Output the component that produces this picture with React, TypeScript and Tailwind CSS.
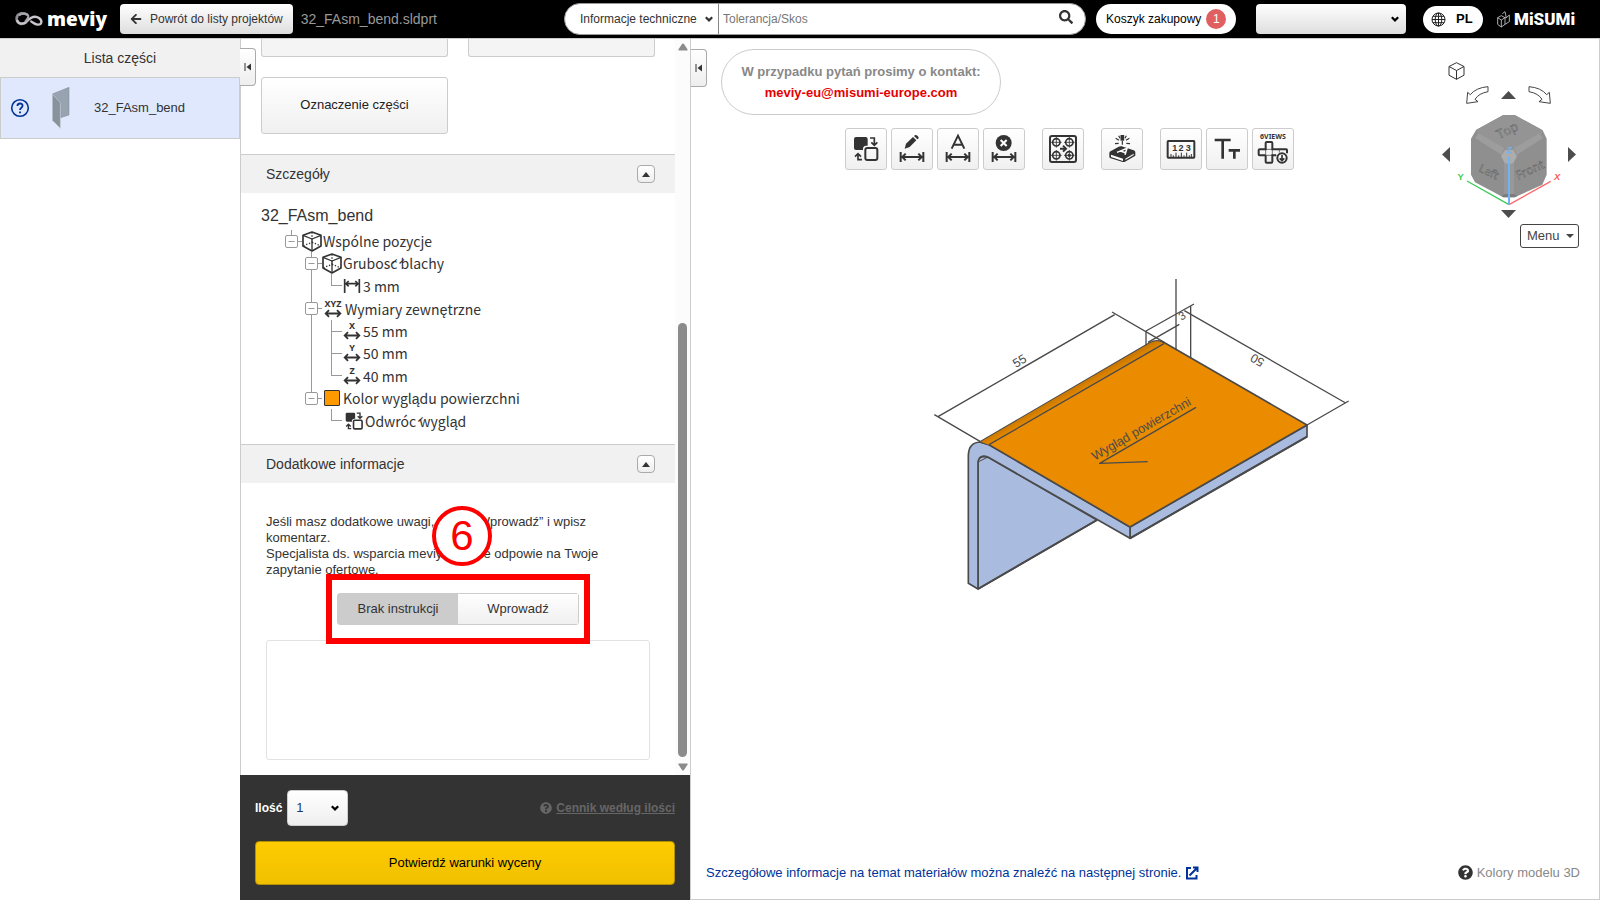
import React, { useState } from 'react';
import { FaArrowLeft, FaQuestionCircle, FaSearch } from 'react-icons/fa';

const Chevron: React.FC<{ className: string }> = ({ className }) => (
    <svg className={className} width="10" height="10" viewBox="0 0 10 10" fill="none" stroke="currentColor" strokeWidth={2.2}>
        <path d="M1.8 3.2L5 6.4L8.2 3.2" />
    </svg>
);

const Header: React.FC = () => (
    <header className="flex h-[38px] shrink-0 items-center bg-black pl-[15px] pr-7 text-xs">
        <a href="#" aria-label="meviy" className="flex h-full w-[105px] items-center gap-[3px] text-white">
            <svg width="29" height="15" viewBox="0 0 87 45" fill="none" className="shrink-0">
                <path d="M38 9C22-2 4 5 5 21C6 36 22 40 34 30" stroke="#8e8b92" strokeWidth="8" />
                <path d="M6 24C10 38 26 38 36 28C46 17 60 10 72 18C84 27 80 39 68 38C58 37 54 31 46 27" stroke="#c9c6cd" strokeWidth="7" />
                <path d="M12 10C24 2 38 5 40 12C40 18 36 24 30 29" stroke="#aaa6ae" strokeWidth="6" />
            </svg>
            <span className="mb-px font-['Open_Sans',sans-serif] text-[19px] leading-5 font-extrabold">meviy</span>
        </a>
        <button type="button" className="flex h-[30px] items-center gap-2 rounded-sm bg-gradient-to-b from-white to-[#dedede] px-[10px] whitespace-nowrap text-[#333]">
            <FaArrowLeft className="size-3" />
            <span>Powrót do listy projektów</span>
        </button>
        <span className="ml-2 text-sm text-[#999]">32_FAsm_bend.sldprt</span>

        <form className="ml-auto flex h-8 w-[522px] items-center overflow-hidden rounded-full border border-[#999] bg-white">
            <div className="relative h-full w-[154px] border-r border-[#888]">
                <select aria-label="Kategoria" className="h-full w-full appearance-none pl-[15px] text-[#333]">
                    <option>Informacje techniczne</option>
                </select>
                <Chevron className="pointer-events-none absolute top-[10px] right-1 text-[#333]" />
            </div>
            <input type="text" aria-label="Szukaj" placeholder="Tolerancja/Skos" className="h-full min-w-0 flex-1 pl-1 placeholder:text-[#777]" />
            <button type="button" aria-label="Szukaj" className="mr-3 mb-1 text-[#333]">
                <FaSearch className="size-[14px]" />
            </button>
        </form>
        <button type="button" className="ml-[10px] flex h-[30px] w-[140px] items-center gap-[5px] rounded-full bg-white pl-[10px] whitespace-nowrap text-black">
            <span>Koszyk zakupowy</span>
            <span className="flex size-5 items-center justify-center rounded-full bg-[#e06062] text-white">1</span>
        </button>
        <div className="relative ml-5 h-[30px] w-[150px]">
            <select aria-label="Konto" className="h-full w-full appearance-none rounded-sm bg-gradient-to-b from-white to-[#dedede]">
                <option></option>
            </select>
            <Chevron className="pointer-events-none absolute top-[10px] right-[6px] text-black" />
        </div>
        <button type="button" className="ml-[17px] flex h-[27px] w-[60px] items-center gap-[10px] rounded-full bg-white pl-2 text-[13px] font-bold text-black">
            <svg width="15" height="15" viewBox="0 0 15 15" fill="none" stroke="#222" strokeWidth="1">
                <circle cx="7.5" cy="7.5" r="6.5" />
                <ellipse cx="7.5" cy="7.5" rx="3.3" ry="6.5" />
                <path d="M7.5 1V14M1 7.5H14M2 4.3H13M2 10.7H13" />
            </svg>
            PL
        </button>
        <a href="#" className="ml-[14px] flex w-[75px] items-center gap-1 text-white">
            <svg width="13" height="17" viewBox="0 0 39 51" fill="none" stroke="#ccc" strokeWidth="2.5" className="shrink-0">
                <path d="M2 20L13 14L24 20V40L13 48L2 40ZM2 20L13 27L24 20M13 27V48M16 8L24 2L28 20L37 12V32L24 40M24 20L28 20" />
            </svg>
            <span className="font-['Roboto',sans-serif] text-[17px] leading-5 font-black">MiSUMi</span>
        </a>
    </header>
);

const CollapseTab: React.FC = () => (
    <button type="button" aria-label="Zwiń panel" className="flex h-[38px] w-4 items-center justify-center rounded-r border border-l-0 border-[#aaa] bg-gradient-to-b from-white to-[#eee]">
        <svg width="8" height="8" viewBox="0 0 8 8">
            <path d="M1 0V8" stroke="#333" />
            <path d="M7 0.5V7.5L2.5 4Z" fill="#333" />
        </svg>
    </button>
);

const PartsList: React.FC = () => (
    <aside className="w-60 shrink-0">
        <h2 className="flex h-[38px] items-center justify-center bg-[#f1f1f1] text-sm text-[#333]">Lista części</h2>
        <button type="button" className="flex h-[62px] w-full items-center border border-[#ccc] bg-[#dfe8fd] pl-[9px] text-[13px] text-[#333]">
            <svg width="20" height="20" viewBox="0 0 20 20" fill="none" stroke="#003399" strokeWidth="1.6">
                <circle cx="10" cy="10" r="8.3" />
                <path d="M7.4 8C7.4 4.7 12.6 4.7 12.6 7.8C12.6 9.7 10 9.7 10 11.9" strokeWidth="1.8" />
                <path d="M10 13.4V15.3" strokeWidth="1.9" />
            </svg>
            <svg width="18" height="42" viewBox="0 0 54 126" className="ml-[22px]">
                <path d="M1 21L51 1V84L26 92V58Z" fill="#98a3b1" stroke="#7f8994" strokeWidth="1.5" />
                <path d="M1 21L25 47V124L1 100Z" fill="#87929d" stroke="#c3cad1" strokeWidth="2" />
            </svg>
            <span className="ml-6">32_FAsm_bend</span>
        </button>
    </aside>
);

const SectionHeader: React.FC<{ title: string }> = ({ title }) => (
    <div className="flex h-[39px] items-center justify-between border-t border-[#ccc] bg-[#f1f1f1] pr-5 pl-[25px]">
        <h3 className="text-sm text-[#333]">{title}</h3>
        <button type="button" aria-label={title} className="flex size-[18px] items-center justify-center rounded-sm border border-[#aaa] bg-gradient-to-b from-white to-[#eee]">
            <svg width="8" height="5" viewBox="0 0 8 5">
                <path d="M0 5L4 0L8 5Z" fill="#333" />
            </svg>
        </button>
    </div>
);

type Guide = 'root' | 'toggle' | 'toggleEnd' | 'line' | 'elbow' | 'elbowEnd' | 'blank';

const guidePaths: Record<Guide, string> = {
    root: 'M9.5 0V5M15 11.5H20',
    toggle: 'M9.5 0V5M9.5 17V23M15 11.5H20',
    toggleEnd: 'M9.5 0V5M15 11.5H20',
    line: 'M9.5 0V23',
    elbow: 'M9.5 0V23M9 11.5H20',
    elbowEnd: 'M9.5 0V12M9 11.5H20',
    blank: '',
};

const TreeGuide: React.FC<{ kind: Guide }> = ({ kind }) => (
    <svg className="h-full w-5 shrink-0" viewBox="0 0 20 23" preserveAspectRatio="xMidYMin slice" fill="none" stroke="#999">
        <path d={guidePaths[kind]} />
        {(kind === 'root' || kind.startsWith('toggle')) && (
            <>
                <rect x="3.5" y="5.5" width="12" height="12" rx="1.5" fill="#fff" />
                <path d="M6.5 11.5H12.5" />
            </>
        )}
    </svg>
);

const CubeIcon: React.FC = () => (
    <svg width="20" height="21" viewBox="0 0 60 63" fill="none" stroke="#333" strokeWidth="5" strokeLinejoin="round">
        <path d="M30 3L57 13V45L30 60L3 45V13Z" />
        <path d="M3 13L30 24L57 13M30 24V60" strokeWidth="4" />
        <path d="M30 4V34L5 44M30 34L55 44" strokeWidth="4" strokeDasharray="4 5" />
    </svg>
);

const WidthIcon: React.FC = () => (
    <svg width="18" height="16" viewBox="0 0 54 48" fill="none" stroke="#333" strokeWidth="5">
        <path d="M5 3V45M49 3V45M8 17H46M17 9L9 17L17 25M37 9L45 17L37 25" />
    </svg>
);

const AxisIcon: React.FC<{ label: string }> = ({ label }) => {
    const width = label.length > 1 ? 22 : 18;
    return (
        <svg className="overflow-visible" width={width} height="20" viewBox={`${-width / 2} 0 ${width} 20`} fill="none" stroke="#333" strokeWidth="1.8">
            <text x="0" y="8" textAnchor="middle" fontSize="9" fontWeight="700" fill="#333" stroke="none" className="font-['Noto_Sans',sans-serif]">
                {label}
            </text>
            <path d="M-7 14.5H7M-4 11.2L-7.3 14.5L-4 17.8M4 11.2L7.3 14.5L4 17.8" />
        </svg>
    );
};

const FlipIcon: React.FC<{ className?: string }> = ({ className }) => (
    <svg className={className} viewBox="24 24 78 78" fill="none" stroke="#333" strokeWidth="7">
        <path d="M33 27H62Q68 27 68 33V53H63Q54 54 54 62V66H33Q27 66 27 60V33Q27 27 33 27Z" fill="#333" stroke="none" />
        <rect x="61" y="60" width="37" height="37" rx="5" />
        <path d="M75 29H89V48M79 42L89 51L99 42M51 96H39V78M29 87L39 77L49 87" strokeWidth="6" />
    </svg>
);

const treeRows: { label: string; guides: Guide[]; icon: React.ReactNode; tall?: boolean }[] = [
    { label: 'Wspólne pozycje', guides: ['root'], icon: <CubeIcon /> },
    { label: 'Grubos\u0301c\u0301 blachy', guides: ['blank', 'toggle'], icon: <CubeIcon /> },
    { label: '3 mm', guides: ['blank', 'line', 'elbowEnd'], icon: <WidthIcon />, tall: true },
    { label: 'Wymiary zewnętrzne', guides: ['blank', 'toggle'], icon: <AxisIcon label="XYZ" />, tall: true },
    { label: '55 mm', guides: ['blank', 'line', 'elbow'], icon: <AxisIcon label="X" /> },
    { label: '50 mm', guides: ['blank', 'line', 'elbow'], icon: <AxisIcon label="Y" /> },
    { label: '40 mm', guides: ['blank', 'line', 'elbowEnd'], icon: <AxisIcon label="Z" />, tall: true },
    {
        label: 'Kolor wyglądu powierzchni',
        guides: ['blank', 'toggleEnd'],
        icon: <span className="mx-[2px] size-4 rounded-[1px] border border-[#333] bg-[#ff9900]" />,
    },
    { label: 'Odwróc\u0301 wygląd', guides: ['blank', 'blank', 'elbowEnd'], icon: <FlipIcon className="mr-px ml-[3px] size-[18px]" />, tall: true },
];

const DetailsTree: React.FC = () => (
    <div className="px-5 pt-[11px] pb-3 text-[#333]">
        <p className="text-base leading-6">32_FAsm_bend</p>
        <ul className="mt-[2px] ml-[21px] font-['Noto_Sans_CJK_JP',sans-serif] text-sm">
            {treeRows.map((row) => (
                <li key={row.label} className={`flex items-center ${row.tall ? 'h-[23px]' : 'h-[22px]'}`}>
                    {row.guides.map((kind, index) => (
                        <TreeGuide key={index} kind={kind} />
                    ))}
                    <span className="flex min-w-5 shrink-0 items-center justify-center">{row.icon}</span>
                    <span className="ml-px leading-[22px] whitespace-nowrap">{row.label}</span>
                </li>
            ))}
        </ul>
    </div>
);

const Scrollbar: React.FC = () => (
    <div className="flex w-[15px] shrink-0 flex-col items-center bg-[#fcfcfc] pt-1 pb-1 text-[#8b8b8b]">
        <svg width="10" height="8" viewBox="0 0 10 8" fill="currentColor">
            <path d="M5 0.5Q5.6 0.5 6 1L9.6 6.5Q9.8 7.5 9 7.5H1Q0.2 7.5 0.4 6.5L4 1Q4.4 0.5 5 0.5Z" />
        </svg>
        <div className="flex w-full flex-1 flex-col items-center justify-end py-[6px]">
            <div className="h-[62%] w-[9px] rounded-full bg-[#8b8b8b]" />
        </div>
        <svg width="10" height="8" viewBox="0 0 10 8" fill="currentColor">
            <path d="M5 7.5Q5.6 7.5 6 7L9.6 1.5Q9.8 0.5 9 0.5H1Q0.2 0.5 0.4 1.5L4 7Q4.4 7.5 5 7.5Z" />
        </svg>
    </div>
);

const QuotePanel: React.FC = () => {
    const [hasComment, setHasComment] = useState(false);

    return (
        <section className="flex w-[451px] shrink-0 flex-col border-r border-[#ccc]">
            <div className="flex min-h-0 flex-1 border-l border-[#ccc]">
                <div className="min-w-0 flex-1 overflow-hidden">
                    <div className="grid grid-cols-2 gap-5 px-5 pb-5">
                        <div className="h-[18px] rounded-b-[3px] border border-t-0 border-[#ccc] bg-[#f4f4f4]" />
                        <div className="h-[18px] rounded-b-[3px] border border-t-0 border-[#ccc] bg-[#f4f4f4]" />
                        <button type="button" className="h-[57px] rounded-[3px] border border-[#ccc] bg-gradient-to-b from-white to-[#f0f0f0] pb-[2px] text-[13px] text-[#222]">
                            Oznaczenie części
                        </button>
                    </div>
                    <SectionHeader title="Szczegóły" />
                    <DetailsTree />
                    <SectionHeader title="Dodatkowe informacje" />
                    <div className="px-[25px] pt-[31px] text-[13px] text-[#333]">
                        <p className="leading-4">
                            Jeśli masz dodatkowe uwagi, kliknij “Wprowadź” i wpisz<br />
                            komentarz.<br />
                            Specjalista ds. wsparcia meviy wkrótce odpowie na Twoje<br />
                            zapytanie ofertowe.
                        </p>
                        <div className="relative mx-auto mt-[15px] flex h-8 w-[242px] rounded-[3px] border border-[#ccc]">
                            <button type="button" aria-pressed={!hasComment} onClick={() => setHasComment(false)} className={`flex-1 ${hasComment ? 'bg-gradient-to-b from-white to-[#f0f0f0]' : 'bg-[#ccc]'}`}>
                                Brak instrukcji
                            </button>
                            <button type="button" aria-pressed={hasComment} onClick={() => setHasComment(true)} className={`flex-1 ${hasComment ? 'bg-[#ccc]' : 'bg-gradient-to-b from-white to-[#f0f0f0]'}`}>
                                Wprowadź
                            </button>
                            {/* Step marker */}
                            <div className="pointer-events-none absolute -inset-x-3 -inset-y-5 z-10 border-[6px] border-[#ff0000]" />
                            <div className="pointer-events-none absolute -top-[88px] left-[94px] z-10 flex size-[60px] items-center justify-center rounded-full border-4 border-[#ff0000] bg-white text-[42px] leading-none text-[#ff0000]">
                                6
                            </div>
                        </div>
                        <textarea aria-label="Komentarz" disabled={!hasComment} className="mt-[15px] block h-[120px] w-full resize-none rounded-[3px] border border-[#e2e2e2] bg-white" />
                    </div>
                </div>
                <Scrollbar />
            </div>
            <div className="h-[125px] shrink-0 bg-[#333] px-[15px] pt-[15px] text-[13px]">
                <div className="flex items-center">
                    <label htmlFor="quantity" className="text-xs font-bold text-white">Ilość</label>
                    <div className="relative ml-[5px] h-9 w-[61px]">
                        <select id="quantity" className="h-full w-full appearance-none rounded-sm border border-[#ccc] bg-gradient-to-b from-white to-[#eee] pl-2 text-[#1f3864]">
                            <option>1</option>
                        </select>
                        <Chevron className="pointer-events-none absolute top-[13px] right-2 text-black" />
                    </div>
                    <a href="#" className="ml-auto flex items-center gap-1 text-xs font-bold text-[#666]">
                        <FaQuestionCircle className="size-3" />
                        <span className="underline">Cennik według ilości</span>
                    </a>
                </div>
                <button type="button" className="mt-[15px] h-11 w-full rounded-sm border border-[#b39000] bg-gradient-to-b from-[#ffcc00] to-[#f0c000] text-black">
                    Potwierdź warunki wyceny
                </button>
            </div>
        </section>
    );
};

const DimensionArrow: React.FC = () => <path d="M29 72V102M97 72V102M34 87H92M44 77L34 87L44 97M82 77L92 87L82 97" />;

const ToolButton: React.FC<{ label: string; children: React.ReactNode }> = ({ label, children }) => (
    <button type="button" aria-label={label} className="size-[42px] rounded-[3px] border border-[#ccc] bg-gradient-to-b from-white to-[#f0f0f0]">
        <svg width="40" height="40" viewBox="3 3 120 120" fill="none" stroke="#333" strokeWidth="6">
            {children}
        </svg>
    </button>
);

const Target: React.FC<{ x: number; y: number }> = ({ x, y }) => (
    <g transform={`translate(${x} ${y})`}>
        <circle r="11" strokeWidth="5" />
        <path d="M-16 0H16M0 -16V16" strokeWidth="2.5" />
    </g>
);

const Toolbar: React.FC = () => (
    <div role="toolbar" className="mt-[13px] ml-[154px] flex gap-[17px]">
        <div className="flex gap-1">
            <ToolButton label="Odwróć wygląd">
                <path d="M33 27H62Q68 27 68 33V53H63Q54 54 54 62V66H33Q27 66 27 60V33Q27 27 33 27Z" fill="#333" stroke="none" />
                <rect x="61" y="60" width="36" height="36" rx="6" />
                <path d="M75 30H88V50M79 43L88 52L97 43M51 95H39V76M30 86L39 77L48 86" strokeWidth="5" />
            </ToolButton>
            <ToolButton label="Edytuj wymiar">
                <path d="M41 62L45 47L66 27L76 37L56 57Z M69 24L73 21Q76 20 79 23L82 26Q84 29 82 32L79 34Z" fill="#333" stroke="none" />
                <DimensionArrow />
            </ToolButton>
            <ToolButton label="Tekst wymiaru">
                <path d="M44 62L63 23L82 62M51 50H75" />
                <DimensionArrow />
            </ToolButton>
            <ToolButton label="Usuń wymiar">
                <circle cx="62" cy="45" r="24" fill="#333" stroke="none" />
                <path d="M53 36L71 54M71 36L53 54" stroke="#fff" />
                <DimensionArrow />
            </ToolButton>
        </div>
        <ToolButton label="Otwory">
            <rect x="24" y="24" width="78" height="78" rx="6" />
            <Target x={43} y={43} />
            <Target x={82} y={43} />
            <Target x={43} y={82} />
            <Target x={82} y={82} />
            <circle cx="82" cy="82" r="5" fill="#333" stroke="none" />
            <path d="M54 62H70M63 53L72 62L63 71" />
        </ToolButton>
        <ToolButton label="Grawerowanie">
            <path d="M25 75Q25 71 30 69L53 56Q57 54 62 55L98 67Q103 69 103 73V83L72 101Q69 103 65 102L29 91Q25 89 25 86Z" fill="#333" stroke="none" />
            <path d="M30 80L66 92V99L30 87ZM73 92L98 77V81L73 96Z" fill="#fff" stroke="none" />
            <path d="M48 73L78 61L72 80M58 69L74 74" stroke="#fff" strokeWidth="4.5" />
            <path d="M64 21V38" strokeWidth="11" />
            <path d="M64 38V50M44 31L54 37M85 31L75 37M42 47L53 46M87 47L76 46M53 23L57 31M76 23L72 31" strokeWidth="3.5" />
        </ToolButton>
        <div className="flex gap-1">
            <ToolButton label="Wymiary">
                <rect x="23" y="39" width="80" height="50" rx="2" />
                <g fontSize="27" fontWeight="700" fill="#333" stroke="none" textAnchor="middle">
                    <text x="44" y="68">1</text>
                    <text x="63" y="68">2</text>
                    <text x="85" y="68">3</text>
                </g>
                <path d="M33 89V78M40 89V82M48 89V74M56 89V82M64 89V74M72 89V82M80 89V74M88 89V82M94 89V78" strokeWidth="3" />
            </ToolButton>
            <ToolButton label="Rozmiar tekstu">
                <path d="M26 36H74M50 36V92" strokeWidth="8" />
                <path d="M68 67H102M85 67V92" strokeWidth="8" />
            </ToolButton>
            <ToolButton label="6VIEWS">
                <text x="63" y="33" textAnchor="middle" fontSize="21" fontWeight="700" fill="#333" stroke="none" className="font-['Noto_Sans',sans-serif]">6VIEWS</text>
                <path d="M44 42H58Q61 42 61 45V64H103Q105 64 105 67V76M41 82H23Q20 82 20 79V67Q20 64 23 64H41V45Q41 42 44 42M41 82V101Q41 104 44 104H58Q61 104 61 101V82H72" />
                <path d="M41 64H61V82H41ZM61 82H74M82 64V74" strokeWidth="2" />
                <circle cx="90" cy="90" r="14" fill="#fff" />
                <path d="M90 81V98M83 91L90 98L97 91" strokeWidth="5" />
            </ToolButton>
        </div>
    </div>
);

const triangles = {
    up: 'M0 8L7.5 0L15 8Z',
    down: 'M0 0H15L7.5 8Z',
    left: 'M8 0V15L0 7.5Z',
    right: 'M0 0V15L8 7.5Z',
};

const ArrowButton: React.FC<{ dir: keyof typeof triangles }> = ({ dir }) => {
    const vertical = dir === 'up' || dir === 'down';
    return (
        <button type="button" aria-label={`Obróć ${dir}`}>
            <svg className="block" width={vertical ? 15 : 8} height={vertical ? 8 : 15} fill="#4d4d4d">
                <path d={triangles[dir]} />
            </svg>
        </button>
    );
};

const ViewNavigator: React.FC = () => (
    <div className="absolute top-[23px] right-5 flex w-[137px] flex-col">
        <button type="button" aria-label="Widok izometryczny" className="ml-[6px] w-4">
            <svg className="block" width="17" height="18" viewBox="0 0 17 18" fill="none" stroke="#333">
                <path d="M8.5 0.7L16 4.5V13.2L8.5 17.3L1 13.2V4.5ZM1 4.5L8.5 8.5L16 4.5M8.5 8.5V17.3" />
            </svg>
        </button>
        <div className="mt-[6px] mr-1 flex h-[18px] items-center justify-center gap-3">
            <button type="button" aria-label="Obróć w lewo">
                <svg className="block" width="23" height="18" viewBox="0 0 69 54" fill="none" stroke="#444" strokeWidth="3">
                    <path d="M66 2Q30 5 13 26L5 19L2 52L36 47L27 40Q38 22 66 17Z" />
                </svg>
            </button>
            <ArrowButton dir="up" />
            <button type="button" aria-label="Obróć w prawo">
                <svg className="block" width="23" height="18" viewBox="0 0 69 54" fill="none" stroke="#444" strokeWidth="3">
                    <path d="M3 2Q39 5 56 26L64 19L67 52L33 47L42 40Q31 22 3 17Z" />
                </svg>
            </button>
        </div>
        <div className="mt-[10px] mr-[3px] flex h-[94px] justify-between">
            <div className="pt-[31px]"><ArrowButton dir="left" /></div>
            <svg width="108" height="94" viewBox="105 190 324 282" fill="none">
                <path d="M250 193H284L368 239L380 264V372L367 402L284 440H250L165 395L153 372V264L168 238Z" fill="#8f8f8f" />
                <path d="M250 193H284L368 239L366 249L282 296H252L176 250L168 238Z" fill="#949494" />
                <path d="M165 262L176 248L254 293L244 312Z M369 262L358 248L281 293L291 312Z" fill="#9d9d9d" />
                <path d="M252 336L267 340L282 336V432H252Z" fill="#989898" />
                <path d="M244 436L254 430H282L292 436L284 440H250Z" fill="#7c7c7c" />
                <path d="M255 297H280L291 317L280 337L267 341L254 337L243 317Z" fill="#acacac" />
                <g fill="#b4b4b4" stroke="#5c5c5c" strokeWidth="1.5" fontSize="38" className="font-['Open_Sans',sans-serif]">
                    <text transform="translate(238 266) rotate(-27)">Top</text>
                    <text transform="translate(174 362) rotate(24)" fontSize="34">Left</text>
                    <text transform="translate(294 388) rotate(-25)" fontSize="36">Front</text>
                </g>
                <path d="M267 462L141 391" stroke="#3ccb5a" strokeWidth="4" />
                <path d="M267 462L392 392" stroke="#ff6868" strokeWidth="4" />
                <path d="M267 462V318" stroke="#6fb2f5" strokeWidth="6" />
                <g fontSize="28" fontWeight="700" textAnchor="middle">
                    <text x="267" y="308" fill="#6fb2f5" fontStyle="italic">Z</text>
                    <text x="122" y="389" fill="#3ccb5a">Y</text>
                    <text x="411" y="389" fill="#ff5a5a" fontStyle="italic">X</text>
                </g>
            </svg>
            <div className="pt-[31px]"><ArrowButton dir="right" /></div>
        </div>
        <div className="mt-[2px] mr-1 flex justify-center"><ArrowButton dir="down" /></div>
        <button type="button" className="mt-[6px] flex h-6 w-[59px] items-center justify-between self-end rounded-[3px] border border-[#444] bg-white pr-1 pl-[6px] text-[13px] text-[#444]">
            Menu
            <svg width="8" height="4" fill="#444"><path d="M0 0H8L4 4Z" /></svg>
        </button>
    </div>
);

const ModelDrawing: React.FC = () => (
    <svg className="mx-auto mt-[100px] shrink-0" width="450" height="330" viewBox="0 0 1350 990" fill="none" stroke="#4a4a4a" strokeWidth="5" strokeLinejoin="round">
        <defs>
            <linearGradient id="bend" gradientUnits="userSpaceOnUse" x1="430" y1="364" x2="446" y2="392">
                <stop offset="0" stopColor="#c27300" />
                <stop offset="1" stopColor="#eb8c00" />
            </linearGradient>
        </defs>
        {/* Vertical flange */}
        <path d="M174 570V957L531 750L205 562Q180 556 174 570Z" fill="#a9bbde" />
        <path d="M174 957L531 750" strokeWidth="6" />
        <path d="M174 576L202 562" strokeWidth="3" />
        {/* Sheet thickness */}
        <path d="M630 771L1161 465V500L630 805Z" fill="#a9bbde" />
        <path d="M174 957L145 940V556Q146 518 180 516L207 524L630 771V805L205 562Q180 550 174 575Z" fill="#a9bbde" />
        <path d="M630 805L1161 500" strokeWidth="6" />
        {/* Top face */}
        <path d="M180 516L690 218Q712 206 735 219L1161 465L630 771L207 524Z" fill="#eb8c00" />
        <path d="M182 515L690 219Q712 208 730 221L207 524Z" fill="url(#bend)" stroke="none" />
        <path d="M207 524L732 221" strokeWidth="4" />
        {/* Dimension lines */}
        <g strokeWidth="4">
            <path d="M54 440L584 134M43 434L180 514M576 126L733 217" />
            <path d="M793 122L1277 399M1161 465L1286 393" />
            <path d="M678 183L822 102M678 183V226M812 108V264M768 27V238M684 217L778 163" />
        </g>
        <g fill="#4a4a4a" stroke="none" fontSize="37">
            <text transform="translate(287 294) rotate(-30)">55</text>
            <text transform="translate(1036 270) rotate(210)">50</text>
            <text transform="translate(784 152) rotate(-30)" fontSize="34">3</text>
            <text transform="translate(524 572) rotate(-30)" fontSize="38">Wygląd powierzchni</text>
        </g>
        <path d="M828 412L539 580L683 575" strokeWidth="4" />
    </svg>
);

const Viewer: React.FC = () => (
    <main className="relative flex min-w-0 flex-1 flex-col border-r border-b border-[#ccc]">
        <div className="absolute top-[10px] left-0"><CollapseTab /></div>
        <div className="mt-[10px] ml-[30px] flex h-[66px] w-[280px] flex-col items-center justify-center rounded-full border border-[#ccc] text-[13px] leading-[21px] font-bold text-[#888]">
            <p>W przypadku pytań prosimy o kontakt:</p>
            <a href="mailto:meviy-eu@misumi-europe.com" className="text-[#e60000]">meviy-eu@misumi-europe.com</a>
        </div>
        <Toolbar />
        <ViewNavigator />
        <ModelDrawing />
        <div className="mt-auto mb-4 flex h-[21px] items-center justify-between pr-[19px] pl-[15px] text-[13px]">
            <a href="#" className="flex items-center gap-1 text-[#003399]">
                Szczegółowe informacje na temat materiałów można znaleźć na następnej stronie.
                <svg width="14" height="14" viewBox="0 0 14 14" fill="none" stroke="currentColor" strokeWidth="2">
                    <path d="M6 2H2V12.5H11.5V9M4.5 9.5L12 2M8 1.5H12.5V6" />
                </svg>
            </a>
            <button type="button" className="flex items-center gap-1 text-[#888]">
                <FaQuestionCircle className="size-[15px] text-[#333]" />
                Kolory modelu 3D
            </button>
        </div>
    </main>
);

const App: React.FC = () => (
    <div className="flex h-screen flex-col bg-white font-['Liberation_Sans',Arial,sans-serif]">
        <Header />
        <div className="flex min-h-0 flex-1 border-t border-[#ccc]">
            <PartsList />
            <div className="relative flex">
                <QuotePanel />
                <div className="absolute top-[9px] left-0"><CollapseTab /></div>
            </div>
            <Viewer />
        </div>
    </div>
);

export default App;
